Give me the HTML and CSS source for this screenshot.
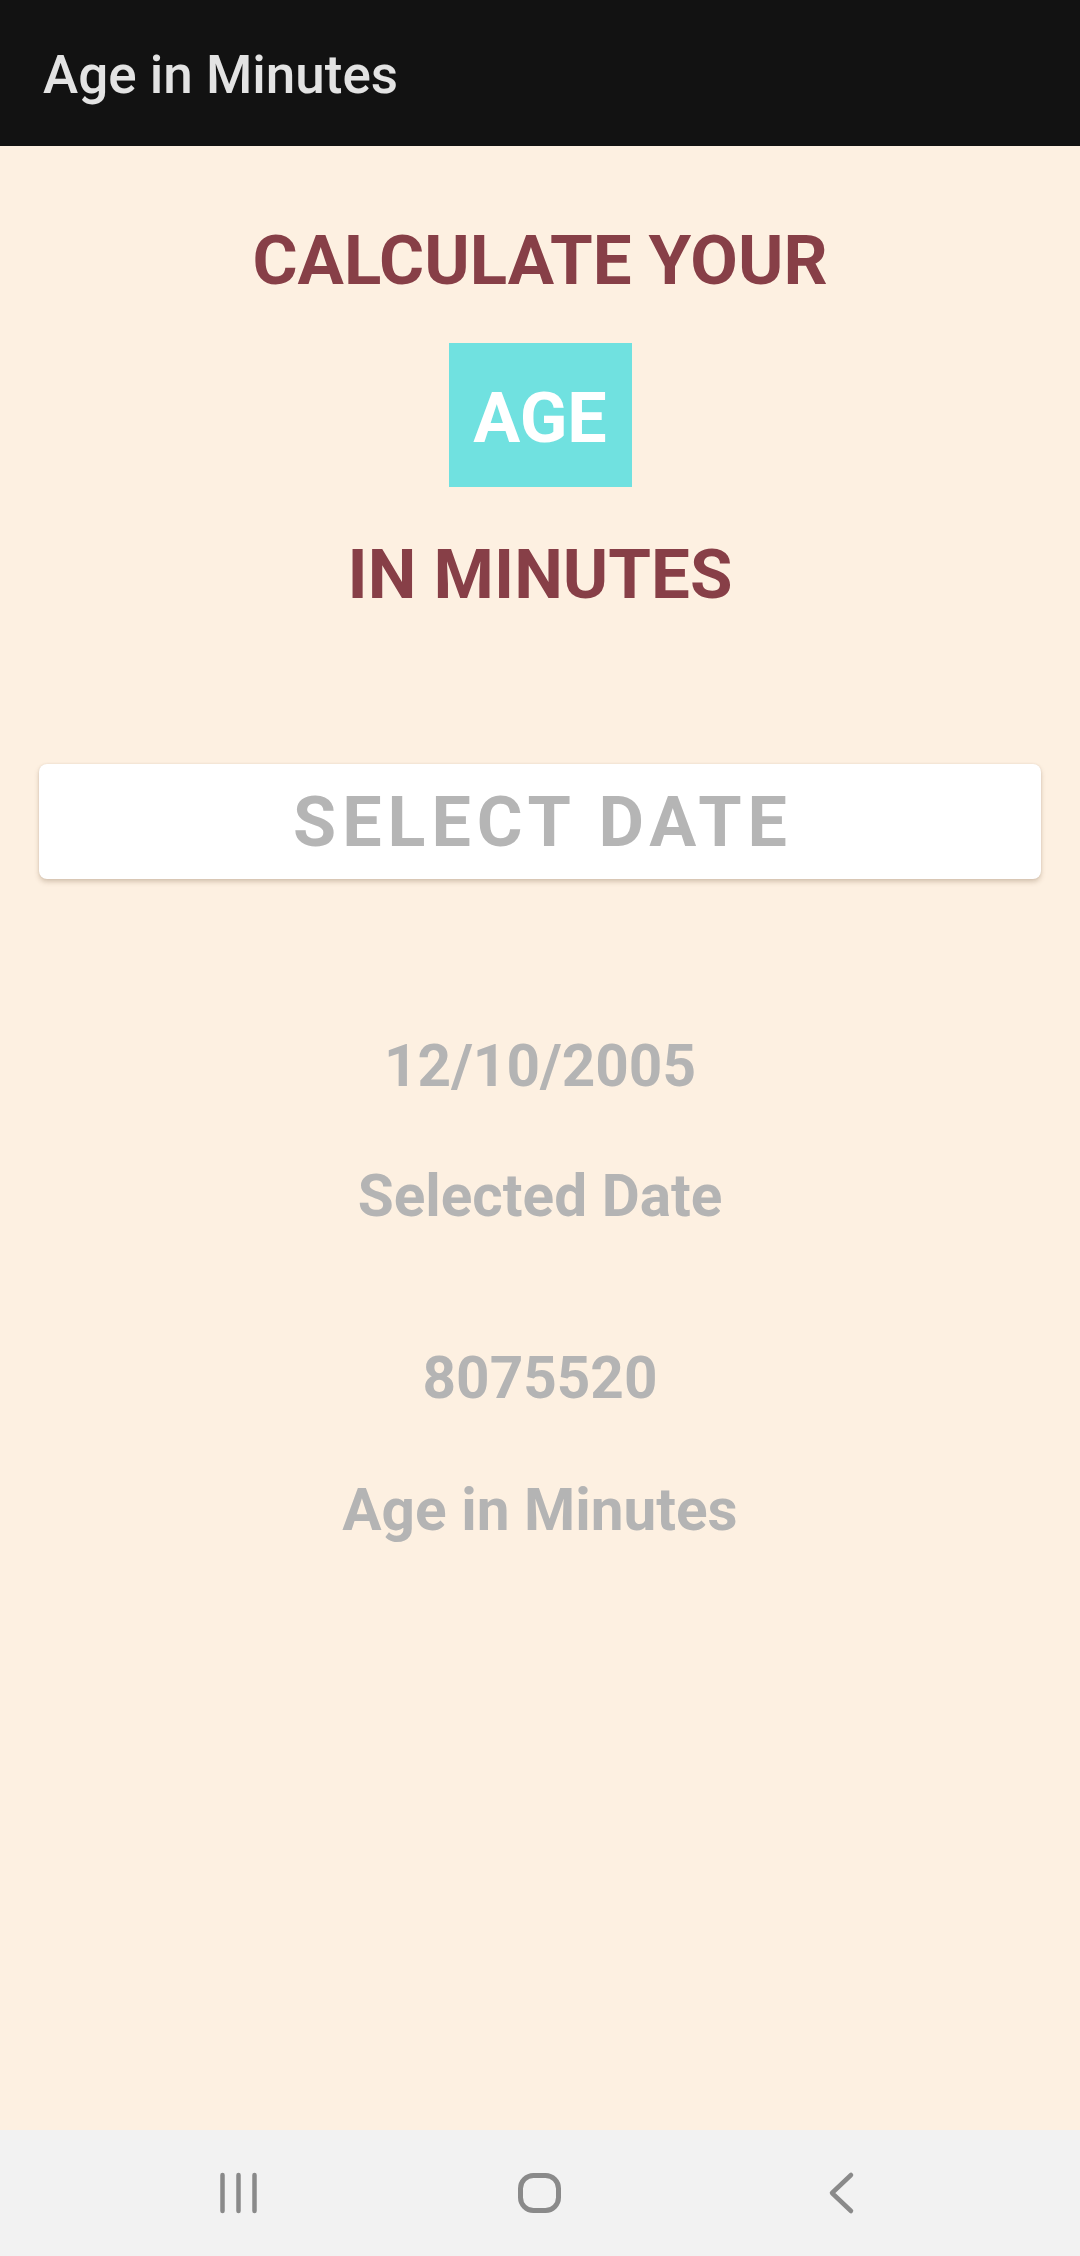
FILE: index.html
```html
<!DOCTYPE html>
<html lang="en">
<head>
<meta charset="utf-8">
<title>Age in Minutes</title>
<link rel="stylesheet" href="styles.css">
</head>
<body>
<div class="screen">
  <header class="appbar">
    <span class="appbar-title">Age in Minutes</span>
  </header>
  <main class="content">
    <h1 class="headline headline-top">CALCULATE YOUR</h1>
    <div class="age-box"><span class="age-text">AGE</span></div>
    <h2 class="headline headline-bottom">IN MINUTES</h2>
    <button class="select-btn" type="button">SELECT DATE</button>
    <div class="info info-date">12/10/2005</div>
    <div class="info info-label1">Selected Date</div>
    <div class="info info-minutes">8075520</div>
    <div class="info info-label2">Age in Minutes</div>
  </main>
  <nav class="navbar">
    <div class="nav-cell">
      <svg width="40" height="44" viewBox="0 0 40 44" class="nav-icon">
        <line x1="4.5" y1="4" x2="4.5" y2="40" />
        <line x1="20.5" y1="4" x2="20.5" y2="40" />
        <line x1="36.5" y1="4" x2="36.5" y2="40" />
      </svg>
    </div>
    <div class="nav-cell">
      <svg width="48" height="46" viewBox="0 0 48 46" class="nav-icon">
        <rect x="4.5" y="5.5" width="38" height="35" rx="13" ry="13" />
      </svg>
    </div>
    <div class="nav-cell">
      <svg width="30" height="44" viewBox="0 0 30 44" class="nav-icon">
        <polyline points="24,4 5,22 24,40" />
      </svg>
    </div>
  </nav>
</div>
</body>
</html>
```

FILE: styles.css
```css
html, body {
  margin: 0;
  padding: 0;
}

body {
  width: 1080px;
  height: 2256px;
  font-family: Roboto, "Noto Sans", "Liberation Sans", sans-serif;
  background: #fdf0e1;
}

.screen {
  display: flex;
  flex-direction: column;
  height: 2256px;
}

.appbar {
  height: 146px;
  flex: 0 0 146px;
  background: #121212;
  display: flex;
  align-items: center;
  padding-left: 43px;
  box-sizing: border-box;
}

.appbar-title {
  color: #e3e3e3;
  font-size: 53px;
  font-weight: 500;
  line-height: 64px;
  position: relative;
  top: 2px;
}

.content {
  flex: 1 1 auto;
  background: #fdf0e1;
  display: flex;
  flex-direction: column;
  align-items: center;
}

.headline {
  margin: 0;
  color: #873f47;
  font-size: 69px;
  font-weight: 700;
  line-height: 82px;
  text-align: center;
}

.headline-top {
  margin-top: 74px;
}

.age-box {
  margin-top: 41px;
  width: 183px;
  height: 144px;
  background: #70e1e0;
  display: flex;
  justify-content: center;
  box-sizing: border-box;
  padding-top: 34px;
}

.age-text {
  color: #ffffff;
  font-size: 70px;
  font-weight: 700;
  line-height: 82px;
}

.headline-bottom {
  margin-top: 47px;
}

.select-btn {
  margin-top: 148px;
  width: 1002px;
  height: 115px;
  background: #ffffff;
  border: none;
  border-radius: 8px;
  box-shadow: 0 3px 5px rgba(120, 90, 60, 0.28), 0 0 2px rgba(120, 90, 60, 0.15);
  color: #b5b5b5;
  font-family: Roboto, "Noto Sans", "Liberation Sans", sans-serif;
  font-size: 70px;
  font-weight: 700;
  letter-spacing: 6px;
  line-height: 82px;
  padding: 0 0 0 6px;
}

.info {
  color: #b4b4b4;
  font-size: 58.5px;
  font-weight: 700;
  line-height: 69px;
  text-align: center;
}

.info-date {
  margin-top: 153px;
}

.info-label1 {
  margin-top: 61px;
}

.info-minutes {
  margin-top: 113px;
}

.info-label2 {
  margin-top: 63px;
}

.navbar {
  flex: 0 0 126px;
  height: 126px;
  background: #f2f2f2;
  display: flex;
  justify-content: center;
  align-items: center;
  gap: 182px;
}

.nav-cell {
  width: 120px;
  display: flex;
  justify-content: center;
  align-items: center;
}

.nav-icon {
  fill: none;
  stroke: #8a8a8a;
  stroke-width: 4.5;
  stroke-linecap: round;
  stroke-linejoin: round;
}

.nav-icon rect {
  stroke-width: 5;
}
```
